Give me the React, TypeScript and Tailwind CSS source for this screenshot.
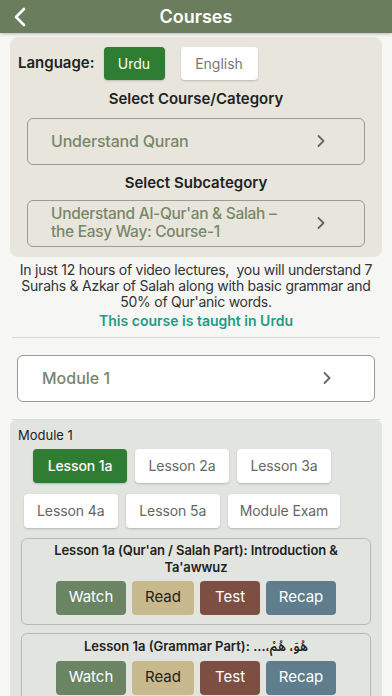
import * as React from "react"

const lessons = ["Lesson 1a", "Lesson 2a", "Lesson 3a", "Lesson 4a", "Lesson 5a", "Module Exam"]

function Chevron({ className }: { className?: string }) {
  return (
    <svg width="10" height="14" viewBox="0 0 10 14" className={className}>
      <path d="M2.5 2 L7.5 7 L2.5 12" fill="none" stroke="currentColor" strokeWidth="1.8" strokeLinecap="round" strokeLinejoin="round" />
    </svg>
  )
}

function ActionRow() {
  return (
    <div className="flex justify-center gap-[6px] text-[15px]">
      <button className="w-[70px] h-[34px] rounded-[4px] bg-[#6b8463] text-white">Watch</button>
      <button className="w-[62px] h-[34px] rounded-[4px] bg-[#c8b98c] text-[#222]">Read</button>
      <button className="w-[60px] h-[34px] rounded-[4px] bg-[#7d4e42] text-white">Test</button>
      <button className="w-[70px] h-[34px] rounded-[4px] bg-[#5f7d8d] text-white">Recap</button>
    </div>
  )
}

export default function App() {
  const [lang, setLang] = React.useState("Urdu")
  const [active, setActive] = React.useState(0)

  return (
    <div className="w-[392px] h-[696px] overflow-hidden bg-[#f6f6f4] font-['Inter','Noto_Sans','Noto_Sans_Arabic','DejaVu_Sans',sans-serif]">
      {/* header */}
      <div className="relative h-[33px] bg-[#6a7d5c] flex items-center justify-center shadow-[0_1px_3px_rgba(0,0,0,0.25)]">
        <svg width="14" height="20" viewBox="0 0 14 20" className="absolute left-[13px] top-[7px]">
          <path d="M11 2 L3 10 L11 18" fill="none" stroke="white" strokeWidth="2.6" strokeLinecap="round" strokeLinejoin="round" />
        </svg>
        <span className="text-white text-[18px] font-semibold">Courses</span>
      </div>

      {/* course selection */}
      <div className="mx-[10px] mt-[4px] rounded-[8px] bg-[#e8e6dc] pt-[10px] pb-[10px]">
        <div className="flex items-center pl-[8px] h-[33px]">
          <span className="text-[15px] font-semibold text-[#222] mr-[9px]">Language:</span>
          {["Urdu", "English"].map((l) => (
            <button
              key={l}
              onClick={() => setLang(l)}
              className={
                lang === l
                  ? "h-[33px] w-[61px] mr-[16px] rounded-[4px] bg-[#2e7d32] text-white text-[14px] shadow-[0_1px_2px_rgba(0,0,0,0.2)]"
                  : "h-[33px] w-[77px] mr-[16px] rounded-[4px] bg-white text-[#777] text-[14px] shadow-[0_1px_2px_rgba(0,0,0,0.2)]"
              }
            >
              {l}
            </button>
          ))}
        </div>
        <div className="text-center text-[15px] font-semibold text-[#222] mt-[8px]">Select Course/Category</div>
        <div className="mx-[17px] mt-[7px] h-[47px] rounded-[6px] border border-[#9b9b90] flex items-center pl-[23px] pr-[38px]">
          <span className="flex-1 text-[16px] font-medium tracking-[-0.2px] text-[#78866a]">Understand Quran</span>
          <Chevron className="text-[#666]" />
        </div>
        <div className="text-center text-[15px] font-semibold leading-[20px] text-[#222] mt-[8px]">Select Subcategory</div>
        <div className="mx-[17px] mt-[7px] h-[47px] rounded-[6px] border border-[#9b9b90] flex items-center pl-[23px] pr-[38px]">
          <span className="flex-1 text-[15.5px] font-medium leading-[18px] tracking-[-0.3px] text-[#78866a]">
            Understand Al-Qur'an &amp; Salah –<br />the Easy Way: Course-1
          </span>
          <Chevron className="text-[#666]" />
        </div>
      </div>

      {/* description */}
      <p className="mt-[5px] px-[10px] text-center text-[14px] leading-[16px] tracking-[-0.25px] text-[#333]">
        In just 12 hours of video lectures,&nbsp; you will understand 7 Surahs &amp; Azkar of Salah along with basic grammar and 50% of Qur'anic words.
      </p>
      <div className="mt-[3px] text-center text-[14px] leading-[16px] font-semibold text-[#1f9c86]">This course is taught in Urdu</div>
      <div className="mx-[12px] mt-[8px] h-px bg-[#d6d6d2]" />

      <div className="mx-[17px] mt-[17px] h-[47px] rounded-[6px] border border-[#9b9b90] bg-white flex items-center pl-[24px] pr-[42px]">
        <span className="flex-1 text-[16px] font-medium text-[#78866a]">Module 1</span>
        <Chevron className="text-[#666]" />
      </div>
      <div className="mx-[12px] mt-[17px] h-px bg-[#dcdcd8]" />

      {/* module panel */}
      <div className="mx-[10px] rounded-t-[6px] bg-[#e2e5df] pt-[7px] pb-[10px]">
        <div className="pl-[8px] text-[13px] leading-[16px] text-[#222]">Module 1</div>
        <div className="flex flex-wrap justify-center gap-x-[8px] gap-y-[11px] pl-[2px] pr-[30px] mt-[6px]">
          {lessons.map((l, i) => (
            <button
              key={l}
              onClick={() => setActive(i)}
              className={
                active === i
                  ? "h-[34px] px-[12px] min-w-[94px] rounded-[4px] bg-[#2e7d32] text-white text-[14px] font-medium tracking-[-0.1px] shadow-[0_1px_2px_rgba(0,0,0,0.2)]"
                  : "h-[34px] px-[12px] min-w-[94px] rounded-[4px] bg-white text-[#666] text-[14px] tracking-[-0.1px] shadow-[0_1px_2px_rgba(0,0,0,0.2)]"
              }
            >
              {l}
            </button>
          ))}
        </div>

        <div className="mx-[11px] mt-[10px] rounded-[6px] border border-[#b8bbb4] pt-[3px] pb-[9px]">
          <div className="text-center text-[13px] font-semibold leading-[17px] tracking-[-0.1px] text-[#222] px-[8px]">
            Lesson 1a (Qur'an / Salah Part): Introduction &amp; Ta'awwuz
          </div>
          <div className="mt-[5px]">
            <ActionRow />
          </div>
        </div>

        <div className="mx-[11px] mt-[8px] rounded-[6px] border border-[#b8bbb4] pt-[4px] pb-[9px]">
          <div className="text-center text-[13px] font-semibold leading-[17px] text-[#222] px-[8px]">
            Lesson 1a (Grammar Part): <span dir="rtl">هُوَ، هُمْ،...</span>
          </div>
          <div className="mt-[6px]">
            <ActionRow />
          </div>
        </div>
      </div>
    </div>
  )
}
